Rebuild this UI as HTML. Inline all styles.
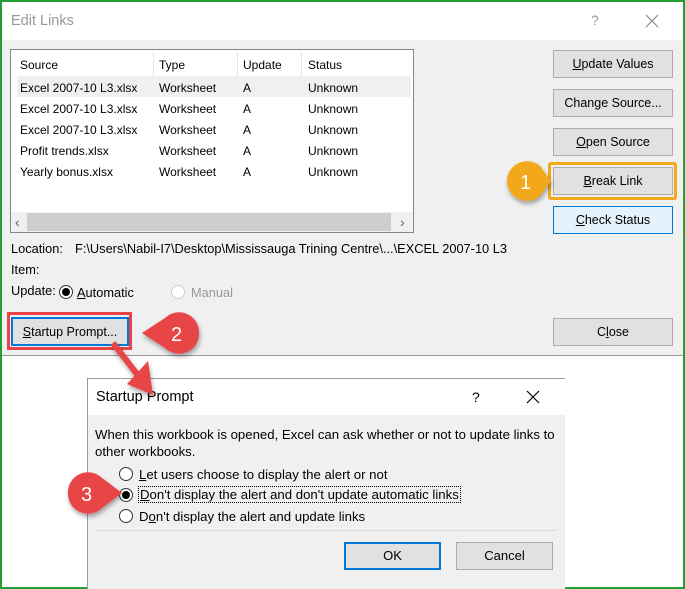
<!DOCTYPE html>
<html><head><style>
*{box-sizing:border-box;margin:0;padding:0}
body{width:685px;height:589px;background:#fff;position:relative;overflow:hidden;font-family:"Liberation Sans",sans-serif;font-size:12px;color:#000}
.a{position:absolute}
.btn{position:absolute;background:#e1e1e1;border:1px solid #adadad;text-align:center;font-size:12.5px}
.t{position:absolute;white-space:nowrap}
.radio{position:absolute;width:14px;height:14px;border:1px solid #333;border-radius:50%;background:#fff}
.radio.on::after{content:"";position:absolute;left:2px;top:2px;width:8px;height:8px;border-radius:50%;background:#000}
.d2{font-size:13.2px}
</style></head><body>
<div class="a" style="left:0;top:0;width:685px;height:589px;border:2px solid #22a033"></div>
<!-- dialog 1 -->
<div class="a" style="left:2px;top:2px;width:681px;height:38px;background:#fff"></div>
<div class="t" style="left:11px;top:13px;font-size:14.5px;color:#999">Edit Links</div>
<div class="t" style="left:591px;top:12px;font-size:14px;color:#999">?</div>
<svg class="a" style="left:645px;top:14px" width="14" height="14"><path d="M1,1 L13,13 M13,1 L1,13" stroke="#888" stroke-width="1.2"/></svg>
<div class="a" style="left:2px;top:40px;width:681px;height:316px;background:#f0f0f0;border-bottom:1px solid #999"></div>
<div class="a" style="left:10px;top:49px;width:404px;height:184px;background:#fff;border:1px solid #828790"></div>
<div class="a" style="left:17px;top:76px;width:394px;height:21px;background:#f0f0f0"></div>
<div class="a" style="left:153px;top:52px;width:1px;height:24px;background:#e5e5e5"></div>
<div class="a" style="left:237px;top:52px;width:1px;height:24px;background:#e5e5e5"></div>
<div class="a" style="left:301px;top:52px;width:1px;height:24px;background:#e5e5e5"></div>
<div class="t" style="left:20px;top:58px">Source</div><div class="t" style="left:159px;top:58px">Type</div><div class="t" style="left:243px;top:58px">Update</div><div class="t" style="left:308px;top:58px">Status</div>
<div class="t" style="left:20px;top:81px">Excel 2007-10 L3.xlsx</div><div class="t" style="left:159px;top:81px">Worksheet</div><div class="t" style="left:243px;top:81px">A</div><div class="t" style="left:308px;top:81px">Unknown</div>
<div class="t" style="left:20px;top:102px">Excel 2007-10 L3.xlsx</div><div class="t" style="left:159px;top:102px">Worksheet</div><div class="t" style="left:243px;top:102px">A</div><div class="t" style="left:308px;top:102px">Unknown</div>
<div class="t" style="left:20px;top:123px">Excel 2007-10 L3.xlsx</div><div class="t" style="left:159px;top:123px">Worksheet</div><div class="t" style="left:243px;top:123px">A</div><div class="t" style="left:308px;top:123px">Unknown</div>
<div class="t" style="left:20px;top:144px">Profit trends.xlsx</div><div class="t" style="left:159px;top:144px">Worksheet</div><div class="t" style="left:243px;top:144px">A</div><div class="t" style="left:308px;top:144px">Unknown</div>
<div class="t" style="left:20px;top:165px">Yearly bonus.xlsx</div><div class="t" style="left:159px;top:165px">Worksheet</div><div class="t" style="left:243px;top:165px">A</div><div class="t" style="left:308px;top:165px">Unknown</div>
<div class="a" style="left:11px;top:212px;width:402px;height:20px;background:#f0f0f0"></div>
<div class="a" style="left:27px;top:213px;width:364px;height:18px;background:#cdcdcd"></div>
<div class="t" style="left:15px;top:214px;color:#606060;font-size:14px">‹</div><div class="t" style="left:400px;top:214px;color:#606060;font-size:14px">›</div>
<div class="btn" style="left:553px;top:50px;width:120px;height:28px;line-height:26px"><u>U</u>pdate Values</div>
<div class="btn" style="left:553px;top:89px;width:120px;height:28px;line-height:26px">Chan<u>g</u>e Source...</div>
<div class="btn" style="left:553px;top:128px;width:120px;height:28px;line-height:26px"><u>O</u>pen Source</div>
<div class="a" style="left:548px;top:162px;width:129px;height:38px;border:3px solid #f3a81c;border-radius:3px"></div>
<div class="btn" style="left:553px;top:167px;width:120px;height:28px;line-height:26px"><u>B</u>reak Link</div>
<div class="btn" style="left:553px;top:206px;width:120px;height:28px;line-height:26px;background:#e5f1fb;border-color:#0078d7"><u>C</u>heck Status</div>
<div class="t" style="left:11px;top:241px;font-size:12.8px">Location:</div><div class="t" style="left:75px;top:241px;font-size:12.8px">F:\Users\Nabil-I7\Desktop\Mississauga Trining Centre\...\EXCEL 2007-10 L3</div>
<div class="t" style="left:11px;top:262px;font-size:12.8px">Item:</div>
<div class="t" style="left:11px;top:283px;font-size:12.8px">Update:</div>
<div class="radio on" style="left:59px;top:285px"></div><div class="t" style="left:77px;top:285px;font-size:12.8px"><u>A</u>utomatic</div>
<div class="radio" style="left:171px;top:285px;border-color:#ccc"></div><div class="t" style="left:191px;top:285px;color:#999;font-size:12.8px">Manual</div>
<div class="a" style="left:7px;top:312px;width:125px;height:38px;border:3px solid #e84447"></div>
<div class="btn" style="left:11px;top:317px;width:118px;height:29px;line-height:27px;border:2px solid #0078d7"><u>S</u>tartup Prompt...</div>
<div class="btn" style="left:553px;top:318px;width:120px;height:28px;line-height:26px">C<u>l</u>ose</div>
<!-- dialog 2 -->
<div class="a" style="left:87px;top:378px;width:478px;height:211px;background:#f0f0f0;border-left:1px solid #999;border-top:1px solid #999"></div>
<div class="a" style="left:88px;top:379px;width:477px;height:36px;background:#fff"></div>
<div class="t" style="left:96px;top:389px;font-size:14.5px">Startup Prompt</div>
<div class="t" style="left:472px;top:389px;font-size:14px">?</div>
<svg class="a" style="left:526px;top:390px" width="14" height="14"><path d="M1,1 L13,13 M13,1 L1,13" stroke="#000" stroke-width="1.2"/></svg>
<div class="t d2" style="left:95px;top:427px">When this workbook is opened, Excel can ask whether or not to update links to</div>
<div class="t d2" style="left:95px;top:444px">other workbooks.</div>
<div class="radio" style="left:119px;top:467px"></div><div class="t d2" style="left:139px;top:467px"><u>L</u>et users choose to display the alert or not</div>
<div class="radio on" style="left:119px;top:488px"></div><div class="t d2" style="left:138px;top:486px;border:1px dotted #000;padding:0 1px"><u>D</u>on't display the alert and don't update automatic links</div>
<div class="radio" style="left:119px;top:509px"></div><div class="t d2" style="left:139px;top:509px">D<u>o</u>n't display the alert and update links</div>
<div class="a" style="left:95px;top:530px;width:462px;height:1px;background:#dcdcdc"></div>
<div class="btn" style="left:344px;top:542px;width:97px;height:28px;line-height:24px;border:2px solid #0078d7;font-size:13px">OK</div>
<div class="btn" style="left:456px;top:542px;width:97px;height:28px;line-height:26px;font-size:13px">Cancel</div>
<!-- callouts -->
<svg class="a" style="left:0;top:0" width="685" height="589">
<defs><filter id="s" x="-50%" y="-50%" width="200%" height="200%"><feDropShadow dx="1" dy="3" stdDeviation="2.5" flood-opacity="0.35"/></filter></defs>
<path d="M507,181 A20,20 0 0 1 540,166 L551,181 L540,196 A20,20 0 0 1 507,181Z" fill="#f3a81c" filter="url(#s)"/>
<text x="520" y="189" font-family="Liberation Sans" font-size="20" fill="#fff">1</text>
<path d="M199,333 A20,20 0 0 1 165,348 L142,333 L165,318 A20,20 0 0 1 199,333Z" fill="#e84447" filter="url(#s)"/>
<text x="171" y="341" font-family="Liberation Sans" font-size="20" fill="#fff">2</text>
<path d="M68,493 A20,20 0 0 1 102,478 L122,493 L102,508 A20,20 0 0 1 68,493Z" fill="#e84447" filter="url(#s)"/>
<text x="81" y="501" font-family="Liberation Sans" font-size="20" fill="#fff">3</text>
<path d="M113,343 L140,378" stroke="#e84447" stroke-width="6" filter="url(#s)"/>
<path d="M127,384 L153,395 L148,361Z" fill="#e84447" filter="url(#s)"/>
</svg>
</body></html>
